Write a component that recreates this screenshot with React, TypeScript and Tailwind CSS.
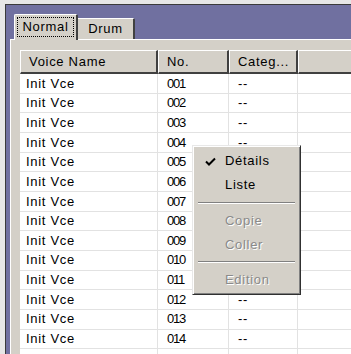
import { Fragment } from 'react';

const rows = Array.from({ length: 15 }, (_, i) => String(i + 1).padStart(3, '0'));

const menuItems = [
  { label: 'Détails', checked: true },
  { label: 'Liste' },
  { sep: true },
  { label: 'Copie', disabled: true },
  { label: 'Coller', disabled: true },
  { sep: true },
  { label: 'Edition', disabled: true },
];

const HeaderCell = ({ label, w }: { label: string; w: string }) => (
  <div
    className={`${w} h-full shrink-0 flex items-center pl-[8px] bg-[#d4d0c8] border-t border-l border-t-white border-l-white border-r-2 border-b-2 border-r-[#404040] border-b-[#404040]`}
  >
    {label}
  </div>
);

export default function App() {
  return (
    <div
      className="relative w-[351px] h-[354px] overflow-hidden bg-[#e6e6e6] pl-[5px] pt-[4px] text-[13px] tracking-[0.7px] text-black"
      style={{ fontFamily: '"Liberation Sans", Arial, sans-serif' }}
    >
      {/* Cadre violet */}
      <div className="h-full flex flex-col border-l border-t border-[#3a3a3a] bg-[#7070a0] pl-[4px]">
        {/* Onglets */}
        <div className="h-[34px] shrink-0 flex items-end pl-[4px]">
          <div className="relative z-10 w-[64px] h-[26px] -mb-[1px] bg-[#d4d0c8] border-t border-l border-white border-r-2 border-r-[#404040] rounded-t-[2px] p-[2px]">
            <div className="h-[20px] border border-dotted border-black flex items-center justify-center">
              Normal
            </div>
          </div>
          <div className="w-[57px] h-[21px] bg-[#d4d0c8] border-t border-white border-r-2 border-r-[#404040] rounded-tr-[2px] flex items-center justify-center">
            Drum
          </div>
        </div>

        {/* Panneau */}
        <div className="flex-1 bg-[#d4d0c8] border-t border-l border-white pl-[9px] pt-[10px]">
          <div className="relative w-[400px] bg-white">
            {/* En-tête */}
            <div className="flex h-[24px]">
              <HeaderCell label="Voice Name" w="w-[138px]" />
              <HeaderCell label="No." w="w-[71px]" />
              <HeaderCell label="Categ..." w="w-[69px]" />
              <HeaderCell label="" w="flex-1" />
            </div>

            {/* Lignes */}
            {rows.map((n) => (
              <div key={n} className="flex h-[19.67px] border-b border-[#e2e2e2]">
                <div className="w-[138px] shrink-0 pl-[6px] flex items-center border-r border-[#e2e2e2]">
                  Init Vce
                </div>
                <div className="w-[71px] shrink-0 pl-[9px] flex items-center border-r border-[#e2e2e2] tracking-[-1.2px]">
                  {n}
                </div>
                <div className="w-[69px] shrink-0 pl-[9px] flex items-center border-r border-[#e2e2e2]">
                  --
                </div>
                <div className="flex-1" />
              </div>
            ))}
          </div>
        </div>
      </div>

      {/* Menu contextuel */}
      <div className="absolute left-[192px] top-[145px] w-[109px] h-[150px] bg-[#d4d0c8] border border-t-[#e8e8e8] border-l-[#e8e8e8] border-r-[#303030] border-b-[#303030] shadow-[inset_1px_1px_0_#ffffff,inset_-1px_-1px_0_#808080] pt-[3px] px-[3px]">
        {menuItems.map((it, i) => (
          <Fragment key={i}>
            {it.sep ? (
              <div className="h-[11.5px] flex flex-col justify-center px-[2px]">
                <div className="h-px bg-[#808080]" />
                <div className="h-px bg-white" />
              </div>
            ) : (
              <div className="h-[24px] flex items-center">
                <div className="w-[29px] shrink-0 flex justify-center">
                  {it.checked && (
                    <svg width="11" height="9" viewBox="0 0 11 9">
                      <path d="M1 4.5 L4 7.5 L10 1.5" fill="none" stroke="#000" strokeWidth="2" />
                    </svg>
                  )}
                </div>
                <span
                  className={it.disabled ? 'text-[#8a8a8a] [text-shadow:1px_1px_0_#ffffff]' : ''}
                >
                  {it.label}
                </span>
              </div>
            )}
          </Fragment>
        ))}
      </div>
    </div>
  );
}
